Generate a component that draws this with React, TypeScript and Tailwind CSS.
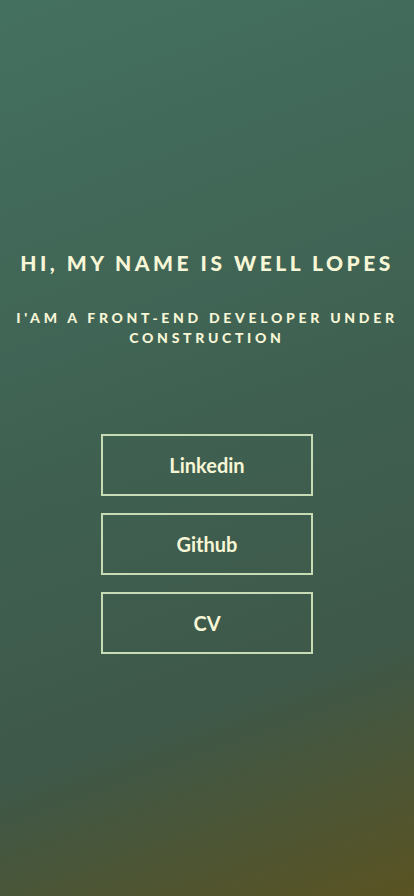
const FONT = { fontFamily: "Lato, 'Open Sans', sans-serif" };

const links = ["Linkedin", "Github", "CV"];

export default function App() {
  return (
    <main
      className="min-h-screen w-full flex flex-col items-center justify-center bg-[linear-gradient(160deg,#44705f_0%,#3f6152_45%,#3e5849_75%,#5a5322_100%)] text-[#f7f6d6] pt-[10px]"
      style={FONT}
    >
      {/* Intro */}
      <h1 className="text-[21px] font-black uppercase tracking-[3.5px] leading-none text-center">
        Hi, my name is Well Lopes
      </h1>
      <h2 className="mt-[35px] px-3 text-[14px] font-black uppercase tracking-[3.7px] leading-[20px] text-center">
        I'am a front-end developer under construction
      </h2>

      {/* Links */}
      <nav className="mt-[86px] flex flex-col gap-[17px]">
        {links.map((label) => (
          <a
            key={label}
            href="#"
            className="w-[212px] h-[62px] flex items-center justify-center border-2 border-[#c7dcb4] text-[20px] font-bold text-[#f7f6d6]"
          >
            {label}
          </a>
        ))}
      </nav>
    </main>
  );
}
